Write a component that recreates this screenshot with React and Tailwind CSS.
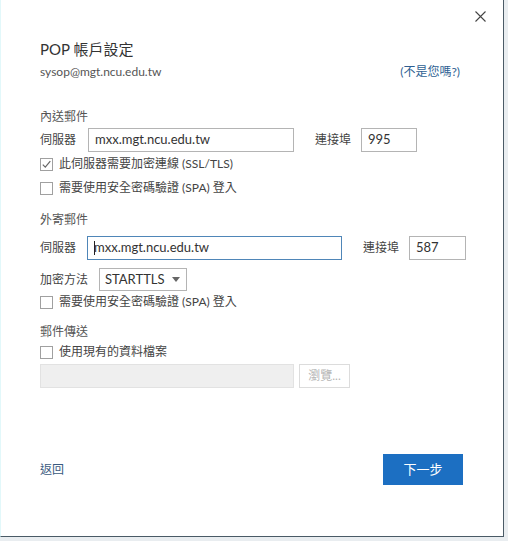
import React from "react";

const font = { fontFamily: 'Lato, "Noto Sans CJK TC", sans-serif' };

function Checkbox({ checked, label }) {
  return (
    <div className="flex items-center h-4 gap-[6px] text-[12px] text-[#444]">
      <span className="w-[13px] h-[13px] border border-[#a0a0a0] bg-white flex items-center justify-center">
        {checked && (
          <svg width="11" height="11" viewBox="0 0 11 11">
            <path d="M1.8 5.6 L4.3 8.2 L9.3 2.2" fill="none" stroke="#666" strokeWidth="1.2" />
          </svg>
        )}
      </span>
      <span>{label}</span>
    </div>
  );
}

function TextBox({ value, className, focused }) {
  return (
    <div
      className={
        "h-6 flex items-center px-[6px] text-[13px] text-[#333] bg-white border " +
        (focused ? "border-[#4f86b8]" : "border-[#b4b4b4]") +
        " " +
        className
      }
    >
      {focused && <span className="w-px h-[14px] bg-[#222] -mr-px" />}
      {value}
    </div>
  );
}

export default function App() {
  return (
    <div className="w-[508px] h-[541px] bg-[#e9edf0]" style={font}>
      <div className="relative w-[504px] h-[537px] bg-white border-r border-b border-[#4a5a66] border-l border-l-[#e2f8fa] pl-[39px] flex flex-col">
        <button className="absolute top-[9px] right-[16px] w-[14px] h-[14px] flex items-center justify-center">
          <svg width="11" height="11" viewBox="0 0 11 11">
            <path d="M0.5 0.5 L10.5 10.5 M10.5 0.5 L0.5 10.5" stroke="#444" strokeWidth="1.1" />
          </svg>
        </button>

        <div className="mt-[39px] h-5 leading-5 text-[15px] text-[#333]">POP 帳戶設定</div>
        <div className="mt-[5px] h-4 leading-4 flex justify-between pr-[43px] text-[12px]">
          <span className="text-[#555]">sysop@mgt.ncu.edu.tw</span>
          <span className="text-[#2e5f92]">(不是您嗎?)</span>
        </div>

        <div className="mt-[29px] h-4 leading-4 text-[12px] text-[#555]">內送郵件</div>
        <div className="mt-[3px] flex items-center text-[12px] text-[#444]">
          <span className="w-[48px]">伺服器</span>
          <TextBox value="mxx.mgt.ncu.edu.tw" className="w-[206px]" />
          <span className="ml-[21px] w-[46px]">連接埠</span>
          <TextBox value="995" className="w-[56px]" />
        </div>
        <div className="mt-[4px]">
          <Checkbox checked label="此伺服器需要加密連線 (SSL/TLS)" />
        </div>
        <div className="mt-[8px]">
          <Checkbox label="需要使用安全密碼驗證 (SPA) 登入" />
        </div>

        <div className="mt-[16px] h-4 leading-4 text-[12px] text-[#555]">外寄郵件</div>
        <div className="mt-[8px] flex items-center text-[12px] text-[#444]">
          <span className="w-[47px]">伺服器</span>
          <TextBox focused value="mxx.mgt.ncu.edu.tw" className="w-[255px]" />
          <span className="ml-[21px] w-[46px]">連接埠</span>
          <TextBox value="587" className="w-[57px]" />
        </div>
        <div className="mt-[8px] flex items-center text-[12px] text-[#444]">
          <span className="w-[59px]">加密方法</span>
          <div className="w-[88px] h-[23px] border border-[#b4b4b4] flex items-center pl-[5px] pr-[6px] text-[13px] text-[#333]">
            <span className="flex-1">STARTTLS</span>
            <svg width="8" height="5" viewBox="0 0 8 5">
              <path d="M0 0 L8 0 L4 5 Z" fill="#666" />
            </svg>
          </div>
        </div>
        <div className="mt-[3px]">
          <Checkbox label="需要使用安全密碼驗證 (SPA) 登入" />
        </div>

        <div className="mt-[14px] h-4 leading-4 text-[12px] text-[#555]">郵件傳送</div>
        <div className="mt-[4px]">
          <Checkbox label="使用現有的資料檔案" />
        </div>
        <div className="mt-[4px] flex items-center">
          <div className="w-[254px] h-6 bg-[#efefef] border border-[#e2e2e2]" />
          <button className="ml-[5px] w-[51px] h-6 border border-[#dcdcdc] bg-white text-[12px] text-[#b5b5b5]">
            瀏覽...
          </button>
        </div>

        <div className="mt-[66px] flex items-center justify-between pr-[40px]">
          <span className="text-[12px] text-[#3a5a80]">返回</span>
          <button className="w-[80px] h-[31px] bg-[#1c6fc2] text-white text-[13px]">下一步</button>
        </div>
      </div>
    </div>
  );
}
